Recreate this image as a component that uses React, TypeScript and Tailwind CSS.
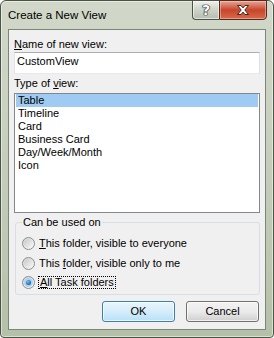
import React from "react";

const views = ["Table", "Timeline", "Card", "Business Card", "Day/Week/Month", "Icon"];

function Radio({ checked }: { checked?: boolean }) {
  return (
    <div className="flex h-[13px] w-[13px] shrink-0 items-center justify-center rounded-full border border-[#8a8d90] bg-gradient-to-br from-[#d4d4d4] to-[#fbfbfb]">
      {checked ? (
        <div className="flex h-[9px] w-[9px] items-center justify-center rounded-full bg-[#a9d3f2]">
          <div className="h-[5px] w-[5px] rounded-full bg-[radial-gradient(circle_at_40%_35%,#7fc0f0,#1f5fa3_70%)]" />
        </div>
      ) : (
        <div className="h-[9px] w-[9px] rounded-full bg-gradient-to-br from-[#c9c9c9] to-[#f7f7f7]" />
      )}
    </div>
  );
}

export default function App() {
  return (
    <div className="h-[338px] w-[274px] bg-white font-['Liberation_Sans',Arial,sans-serif] text-[11px] leading-[13px] text-black">
      <div className="flex h-full flex-col rounded-t-[6px] rounded-b-[4px] border border-[#4a5443] bg-gradient-to-b from-[#d2d8c9] via-[#c5cdba] to-[#b5c0a8] shadow-[inset_0_0_0_1px_rgba(255,255,255,0.5)]">
        {/* title bar */}
        <div className="flex h-[28px] items-start">
          <div className="pl-[7px] pt-[8px] text-[11.5px]">Create a New View</div>
          <div className="-mt-px mr-[6px] ml-auto flex">
            <div className="flex h-[20px] w-[27px] items-center justify-center rounded-bl-[4px] border border-r-0 border-[#4d5249] bg-gradient-to-b from-[#eef1ea] via-[#cdd3c8] to-[#b6beb0] shadow-[inset_0_0_0_1px_rgba(255,255,255,0.55)]">
              <span className="font-['DejaVu_Sans',sans-serif] text-[14px] font-bold leading-none text-white [text-shadow:0_0_1px_#222,0_0_1px_#222,0_0_1px_#222,0_0_1px_#222]">
                ?
              </span>
            </div>
            <div className="flex h-[20px] w-[48px] items-center justify-center rounded-br-[4px] border border-[#4e2a22] bg-gradient-to-b from-[#e6a493] via-[#c6442b] to-[#da6a4a] shadow-[inset_0_0_0_1px_rgba(255,220,210,0.45)]">
              <svg width="14" height="12" viewBox="0 0 14 12">
                <path
                  d="M1.5 1.5H5L7 3.9L9 1.5H12.5L8.8 6L12.5 10.5H9L7 8.1L5 10.5H1.5L5.2 6Z"
                  fill="#fff"
                  stroke="#4a231b"
                  strokeWidth="1"
                  strokeLinejoin="round"
                />
              </svg>
            </div>
          </div>
        </div>

        {/* client area */}
        <div className="mx-[7px] mb-[7px] flex flex-1 flex-col border border-[#7b8776] bg-[#f0f0f0] pl-[5px] pr-[5px] pt-[8px]">
          <div>
            <u>N</u>ame of new view:
          </div>
          <div className="mt-px h-[22px] border border-[#abadb3] border-l-[#e2e3ea] border-r-[#dbdfe6] border-b-[#e3e9ef] bg-white pl-[2px] pt-[2px]">
            CustomView
          </div>

          <div className="mt-[3px]">
            Type of <u>v</u>iew:
          </div>
          <div className="mt-[3px] h-[120px] border border-[#828790] bg-white px-px">
            {views.map((v, i) => (
              <div key={v} className={`h-[13px] pl-[2px] ${i === 0 ? "bg-[#9fcaf1]" : ""}`}>
                {v}
              </div>
            ))}
          </div>

          <fieldset className="mt-[3px] ml-px rounded-[3px] border border-[#d5dfe5] px-0 pb-[5px]">
            <legend className="ml-[6px] px-px">Can be used on</legend>
            <div className="mt-[8px] flex flex-col gap-[6px] pl-[6px]">
              <div className="flex h-[13px] items-center gap-[4px]">
                <Radio />
                <span>
                  <u>T</u>his folder, visible to everyone
                </span>
              </div>
              <div className="mt-px flex h-[13px] items-center gap-[4px]">
                <Radio />
                <span>
                  This <u>f</u>older, visible only to me
                </span>
              </div>
              <div className="flex h-[13px] items-center gap-[3px]">
                <Radio checked />
                <span className="border border-dotted border-black px-px leading-[11px]">
                  <u>A</u>ll Task folders
                </span>
              </div>
            </div>
          </fieldset>

          <div className="mt-[6px] mr-px flex justify-end gap-[11px]">
            <button className="flex h-[21px] w-[73px] items-center justify-center rounded-[3px] border border-[#3c7fb1] bg-gradient-to-b from-[#e8f5fc] via-[#d5edfa] to-[#b8e0f6] shadow-[inset_0_0_0_1px_rgba(255,255,255,0.7)]">
              OK
            </button>
            <button className="flex h-[21px] w-[73px] items-center justify-center rounded-[3px] border border-[#707070] bg-gradient-to-b from-[#f2f2f2] via-[#ebebeb] to-[#cfcfcf] shadow-[inset_0_0_0_1px_rgba(255,255,255,0.7)]">
              Cancel
            </button>
          </div>
        </div>
      </div>
    </div>
  );
}
